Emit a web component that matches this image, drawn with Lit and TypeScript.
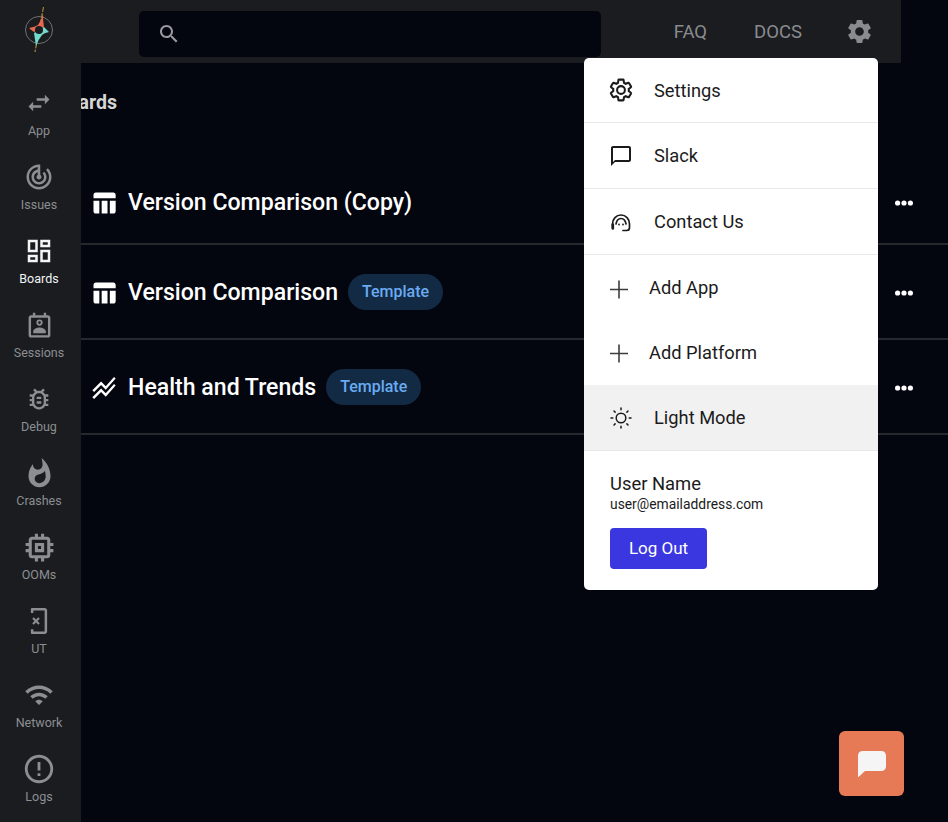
import { LitElement, html, css, svg } from "lit";
import { customElement } from "lit/decorators.js";

const P: Record<string, string> = {
  swap: "M6.99 11L3 15l3.99 4v-3H14v-2H6.99v-3zM21 9l-3.99-4v3H10v2h7.01v3L21 9z",
  track: "M19.07 4.93l-1.41 1.41C19.1 7.79 20 9.79 20 12c0 4.42-3.58 8-8 8s-8-3.58-8-8c0-4.08 3.05-7.44 7-7.93v2.02C8.16 6.57 6 9.03 6 12c0 3.31 2.69 6 6 6s6-2.69 6-6c0-1.66-.67-3.16-1.76-4.24l-1.41 1.41C15.55 9.9 16 10.9 16 12c0 2.21-1.79 4-4 4s-4-1.79-4-4c0-1.86 1.28-3.41 3-3.86v2.14c-.6.35-1 .98-1 1.72 0 1.1.9 2 2 2s2-.9 2-2c0-.74-.4-1.38-1-1.72V2h-1C6.48 2 2 6.48 2 12s4.48 10 10 10 10-4.48 10-10c0-2.76-1.12-5.26-2.93-7.07z",
  dash: "M19 5v2h-4V5h4M9 5v6H5V5h4m10 8v6h-4v-6h4M9 17v2H5v-2h4M21 3h-8v6h8V3zM11 3H3v10h8V3zm10 8h-8v10h8V11zm-10 4H3v6h8v-6z",
  session: "M19 3.500h-1.500V1.500h-2v2h-7v-2h-2v2H5c-1.100 0-2 .9-2 2v14.500c0 1.100.9 2 2 2h14c1.100 0 2-.9 2-2V5.500c0-1.100-.9-2-2-2zm0 16.500H5V5.500h14V20zM12 7a2.600 2.600 0 1 0 0 5.200A2.600 2.600 0 0 0 12 7zm0 1.500a1.100 1.100 0 1 1 0 2.200 1.100 1.100 0 0 1 0-2.200zM6.800 18.500v-1.700c0-2.100 3.500-3.200 5.200-3.200s5.200 1.100 5.200 3.200v1.700H6.800z",
  bug: "M20 8h-2.81c-.45-.78-1.07-1.45-1.82-1.96L17 4.41 15.59 3l-2.17 2.17C12.96 5.06 12.49 5 12 5s-.96.06-1.41.17L8.41 3 7 4.41l1.62 1.63C7.88 6.55 7.26 7.22 6.81 8H4v2h2.09c-.05.33-.09.66-.09 1v1H4v2h2v1c0 .34.04.67.09 1H4v2h2.81c1.04 1.79 2.97 3 5.19 3s4.15-1.21 5.19-3H20v-2h-2.09c.05-.33.09-.66.09-1v-1h2v-2h-2v-1c0-.34-.04-.67-.09-1H20V8zm-4 4v3c0 .22-.03.47-.07.7l-.1.65-.37.65c-.72 1.24-2.04 2-3.46 2s-2.74-.77-3.46-2l-.37-.64-.1-.65C8.03 15.48 8 15.23 8 15v-4c0-.23.03-.48.07-.7l.1-.65.37-.65c.3-.52.72-.97 1.21-1.31l.57-.39.74-.18c.31-.08.63-.12.94-.12.32 0 .63.04.95.12l.68.16.61.42c.5.34.91.78 1.21 1.31l.38.65.1.65c.04.22.07.47.07.69v1zm-6 2h4v2h-4zm0-4h4v2h-4z",
  fire: "M13.5.67s.74 2.65.74 4.8c0 2.06-1.35 3.73-3.41 3.73-2.07 0-3.63-1.67-3.63-3.73l.03-.36C5.21 7.51 4 10.62 4 14c0 4.42 3.58 8 8 8s8-3.58 8-8C20 8.61 17.41 3.8 13.5.67zM11.71 19c-1.78 0-3.22-1.4-3.22-3.14 0-1.62 1.05-2.76 2.81-3.12 1.77-.36 3.6-1.21 4.62-2.58.39 1.29.59 2.65.59 4.04 0 2.65-2.15 4.8-4.8 4.8z",
  chip: "M15 9H9v6h6V9zm-2 4h-2v-2h2v2zm8-2V9h-2V7c0-1.1-.9-2-2-2h-2V3h-2v2h-2V3H9v2H7c-1.1 0-2 .9-2 2v2H3v2h2v2H3v2h2v2c0 1.1.9 2 2 2h2v2h2v-2h2v2h2v-2h2c1.1 0 2-.9 2-2v-2h2v-2h-2v-2h2zm-4 6H7V7h10v10z",
  wifi: "M1 9l2 2c4.97-4.97 13.03-4.97 18 0l2-2C16.93 2.93 7.08 2.93 1 9zm8 8l3 3 3-3c-1.65-1.66-4.34-1.66-6 0zm-4-4l2 2c2.76-2.76 7.24-2.76 10 0l2-2C15.14 9.14 8.87 9.14 5 13z",
  error: "M11 15h2v2h-2zm0-8h2v6h-2zm.99-5C6.47 2 2 6.48 2 12s4.47 10 9.99 10C17.52 22 22 17.52 22 12S17.52 2 11.99 2zM12 20c-4.42 0-8-3.58-8-8s3.58-8 8-8 8 3.58 8 8-3.58 8-8 8z",
  ut: "M6.500 1.600H16.500c1.100 0 2 .9 2 2v16.800c0 1.100-.9 2-2 2H6.500c-.6 0-1-.4-1-1V18.500h2v1.900h9V3.600h-9v1.900h-2V2.600c0-.6.4-1 1-1zM7.800 9l1.800 1.800L11.400 9l1.200 1.200-1.800 1.800 1.800 1.800-1.200 1.200-1.800-1.800-1.800 1.800-1.200-1.200L8.400 12l-1.800-1.800z",
  search: "M15.5 14h-.79l-.28-.27C15.41 12.59 16 11.11 16 9.5 16 5.91 13.09 3 9.5 3S3 5.91 3 9.5 5.91 16 9.5 16c1.61 0 3.09-.59 4.23-1.57l.27.28v.79l5 4.99L20.49 19l-4.99-5zm-6 0C7.01 14 5 11.99 5 9.5S7.01 5 9.5 5 14 7.01 14 9.5 11.99 14 9.5 14z",
  gear: "M19.14 12.94c.04-.3.06-.61.06-.94 0-.32-.02-.64-.07-.94l2.03-1.58c.18-.14.23-.41.12-.61l-1.92-3.32c-.12-.22-.37-.29-.59-.22l-2.39.96c-.5-.38-1.03-.7-1.62-.94l-.36-2.54c-.04-.24-.24-.41-.48-.41h-3.84c-.24 0-.43.17-.47.41l-.36 2.54c-.59.24-1.13.57-1.62.94l-2.39-.96c-.22-.08-.47 0-.59.22L2.74 8.87c-.12.21-.08.47.12.61l2.03 1.58c-.05.3-.09.63-.09.94s.02.64.07.94l-2.03 1.58c-.18.14-.23.41-.12.61l1.92 3.32c.12.22.37.29.59.22l2.39-.96c.5.38 1.03.7 1.62.94l.36 2.54c.05.24.24.41.48.41h3.84c.24 0 .44-.17.47-.41l.36-2.54c.59-.24 1.13-.56 1.62-.94l2.39.96c.22.08.47 0 .59-.22l1.92-3.32c.12-.22.07-.47-.12-.61l-2.01-1.58zM12 15.6c-1.98 0-3.6-1.62-3.6-3.6s1.62-3.6 3.6-3.6 3.6 1.62 3.6 3.6-1.62 3.6-3.6 3.6z",
  table: "M10 10.02h5V21h-5zM17 21h3c1.1 0 2-.9 2-2v-9h-5v11zm3-18H5c-1.1 0-2 .9-2 2v3h19V5c0-1.1-.9-2-2-2zM3 19c0 1.1.9 2 2 2h3V10H3v9z",
  lines: "M2 19.99l7.5-7.51 4 4 7.09-7.97L22 9.92l-8.5 9.56-4-4-6 6.01-1.5-1.5zm1.5-4.5l6-6.01 4 4L22 3.92l-1.41-1.41-7.09 7.97-4-4L2 13.99l1.5 1.5z",
  msg: "M20 2H4c-1.1 0-2 .9-2 2v18l4-4h14c1.1 0 2-.9 2-2V4c0-1.1-.9-2-2-2zm0 14H6l-2 2V4h16v12z",
};

const icon = (d: string, size: number, cls = "") =>
  html`<svg class=${cls} width=${size} height=${size} viewBox="0 0 24 24" fill="currentColor"><path d=${d}></path></svg>`;

const logo = svg`<svg width="32" height="48" viewBox="0 0 32 48" fill="none">
  <circle cx="16" cy="24" r="13.500" stroke="#6f7175" stroke-width="1"></circle>
  <path d="M20.500 1 L12 46" stroke="#a8862e" stroke-width="1.200" stroke-dasharray="5 1.200"></path>
  <path d="M20 8 Q20 16 21 21 L16 24 L11 26 Q8 24 6 22 Q12 21 15 19 Q18 15 20 8Z" fill="#e4694e"></path>
  <path d="M26 26 Q21 27 19 29 Q15 34 13 40 Q12 34 11 27 L16 24 L21 21 Q24 24 26 26Z" fill="#72d9cd"></path>
  <circle cx="16" cy="24" r="4" fill="#1a1c20"></circle>
</svg>`;

const plusIcon = html`<svg width="24" height="24" viewBox="0 0 24 24" fill="none" stroke="#3c3c3c" stroke-width="1.600"><path d="M10 4.500V22.500M1 13.500H19"></path></svg>`;
const gearOutline = html`<svg class="g-out" width="26" height="26" viewBox="0 0 24 24" fill="none" stroke="#1b1b1b" stroke-width="1.900"><path d=${P.gear}></path></svg>`;
const headset = html`<svg width="24" height="24" viewBox="0 0 24 24" fill="none" stroke="#1b1b1b" stroke-width="1.700" stroke-linecap="round"><path d="M3.500 17v-3C3.500 9 7.200 5 12 5s8.500 4 8.500 9v3.500c0 1.800-1 3-2.800 3H14"></path><path d="M7 14c.5-3 2.500-5.500 5-5.500s4.500 2.500 5 5.500"></path><path d="M3.800 14.500v4" stroke-width="2.600"></path><circle cx="10" cy="14.500" r=".9" fill="#1b1b1b" stroke="none"></circle><circle cx="14" cy="14.500" r=".9" fill="#1b1b1b" stroke="none"></circle></svg>`;
const sun = html`<svg class="g-out" width="26" height="26" viewBox="0 0 26 26" fill="none" stroke="#1b1b1b" stroke-width="1.500" stroke-linecap="round"><circle cx="13" cy="13" r="4.800"></circle><path d="M13 3v1.800M13 21.200V23M3 13h1.800M21.200 13H23M6 6l1.100 1.100M18.900 18.900L20 20M6 20l1.100-1.100M18.900 7.100L20 6"></path></svg>`;

const NAV = [
  { label: "App", d: P.swap, s: 28 },
  { label: "Issues", d: P.track, s: 30 },
  { label: "Boards", d: P.dash, s: 30, active: true },
  { label: "Sessions", d: P.session, s: 29 },
  { label: "Debug", d: P.bug, s: 28 },
  { label: "Crashes", d: P.fire, s: 33 },
  { label: "OOMs", d: P.chip, s: 37 },
  { label: "UT", d: P.ut, s: 30 },
  { label: "Network", d: P.wifi, s: 30 },
  { label: "Logs", d: P.error, s: 34 },
];

const BOARDS = [
  { name: "Version Comparison (Copy)", d: P.table, template: false },
  { name: "Version Comparison", d: P.table, template: true },
  { name: "Health and Trends", d: P.lines, template: true },
];

@customElement("app-root")
export class AppRoot extends LitElement {
  static styles = css`
    :host {
      display: block;
      position: relative;
      height: 100vh;
      overflow: hidden;
      background: #03050f;
      font-family: Roboto, "Liberation Sans", sans-serif;
    }
    .shell { display: grid; grid-template-columns: 81px 1fr; height: 100%; }
    .side { background: #1a1c20; display: flex; flex-direction: column; padding-right: 3px; }
    .logo { height: 84px; display: flex; justify-content: center; padding-top: 6px; box-sizing: border-box; }
    .nav { height: 74px; display: flex; flex-direction: column; align-items: center; color: #8d8e92; font-size: 12.500px; line-height: 16px; }
    .nav.active { color: #f4f4f4; }
    .nav-ic { height: 38px; margin-bottom: 1px; display: flex; align-items: center; justify-content: center; }
    .main { overflow: hidden; min-width: 0; }
    .top { width: 820px; height: 63px; background: #1a1c20; display: flex; align-items: center; box-sizing: border-box; padding: 0 27px 0 58px; }
    .search { width: 462px; height: 46px; margin-top: 5px; background: #03050f; border-radius: 5px; display: flex; align-items: center; padding-left: 18px; box-sizing: border-box; color: #9a9b9f; }
    .links { margin-left: auto; display: flex; align-items: center; gap: 47px; color: #8a8b8f; font-size: 18.500px; font-weight: 400; }
    .links a { display: block; }
    .links svg { display: block; margin-left: -4px; }
    .head { height: 96px; box-sizing: border-box; margin-left: -26px; padding-top: 28px; font-size: 19.600px; line-height: 24px; font-weight: 700; color: #d6d6d6; }
    .row { display: flex; align-items: center; padding: 29.500px 35px 27.500px 9px; border-bottom: 2px solid #25282c; color: #fff; }
    .row.first { padding-bottom: 26.500px; }
    .row-ic { display: block; margin-right: 10px; flex: none; }
    .name { font-size: 23.100px; line-height: 25px; font-weight: 500; }
    .chip { margin-left: 10px; height: 36px; width: 95px; margin-top: -1px; margin-bottom: 1px; border-radius: 18px; background: #132a45; color: #69abf2; font-size: 16px; font-weight: 500; display: flex; align-items: center; justify-content: center; }
    .more { margin-left: auto; display: block; }
    .menu { position: absolute; left: 584px; top: 58px; width: 294px; height: 532px; background: #fff; border-radius: 5px; color: #1b1b1b; font-size: 18.300px; display: flex; flex-direction: column; }
    .item { height: 66px; flex: none; display: flex; align-items: center; padding-left: 25px; box-sizing: border-box; border-bottom: 1px solid #e9e9e9; }
    .item.first { height: 65px; }
    .item .mi { width: 45px; display: flex; align-items: center; flex: none; color: #1b1b1b; }
    .g-out { margin-left: -1px; }
    .item.add { height: 65px; border-bottom: none; }
    .item.add + .item.add { padding-bottom: 1px; }
    .item.add .mi { width: 40px; }
    .item.hl { background: #f1f1f1; }
    .user { padding: 22px 0 0 26px; }
    .uname { font-size: 18.400px; line-height: 21px; }
    .email { font-size: 13.850px; line-height: 19px; margin-top: 1px; }
    .logout { margin-top: 14px; width: 97px; height: 41px; padding-bottom: 1px; box-sizing: border-box; border-radius: 4px; background: #3a36e0; color: #fff; font-size: 17px; display: flex; align-items: center; justify-content: center; }
    .fab { position: absolute; left: 839px; top: 731px; width: 65px; height: 65px; border-radius: 6px; background: #e67a57; display: flex; align-items: center; justify-content: center; }
    .fab svg { display: block; margin: 0 0 0 1px; }
  `;

  render() {
    return html`
      <div class="shell">
        <aside class="side">
          <div class="logo">${logo}</div>
          ${NAV.map(
            (n) => html`<div class="nav ${n.active ? "active" : ""}">
              <div class="nav-ic">${icon(n.d, n.s)}</div>
              <span>${n.label}</span>
            </div>`
          )}
        </aside>
        <main class="main">
          <header class="top">
            <div class="search">${icon(P.search, 24)}</div>
            <nav class="links">
              <a>FAQ</a><a>DOCS</a>${icon(P.gear, 29)}
            </nav>
          </header>
          <div class="head">Boards</div>
          ${BOARDS.map(
            (b, i) => html`<div class="row ${i === 0 ? "first" : ""}">
              ${icon(b.d, 28, "row-ic")}
              <span class="name">${b.name}</span>
              ${b.template ? html`<span class="chip">Template</span>` : ""}
              <svg class="more" width="18" height="6" viewBox="0 0 18 6" fill="#fff"><circle cx="2.600" cy="3" r="2.600"></circle><circle cx="9" cy="3" r="2.600"></circle><circle cx="15.400" cy="3" r="2.600"></circle></svg>
            </div>`
          )}
        </main>
      </div>
      <div class="menu">
        <div class="item first"><span class="mi">${gearOutline}</span>Settings</div>
        <div class="item"><span class="mi">${icon(P.msg, 24)}</span>Slack</div>
        <div class="item"><span class="mi">${headset}</span>Contact Us</div>
        <div class="item add"><span class="mi">${plusIcon}</span>Add App</div>
        <div class="item add"><span class="mi">${plusIcon}</span>Add Platform</div>
        <div class="item hl"><span class="mi">${sun}</span>Light Mode</div>
        <div class="user">
          <div class="uname">User Name</div>
          <div class="email">user@emailaddress.com</div>
          <div class="logout">Log Out</div>
        </div>
      </div>
      <div class="fab">
        <svg width="28" height="26" viewBox="0 0 28 26" fill="#f5f5f5"><path d="M4.500 0H23.500C26 0 28 2 28 4.500V15.500C28 18 26 20 23.500 20H7L.6 26C.3 26.300 0 26 0 25.500V4.500C0 2 2 0 4.500 0Z"></path></svg>
      </div>
    `;
  }
}
